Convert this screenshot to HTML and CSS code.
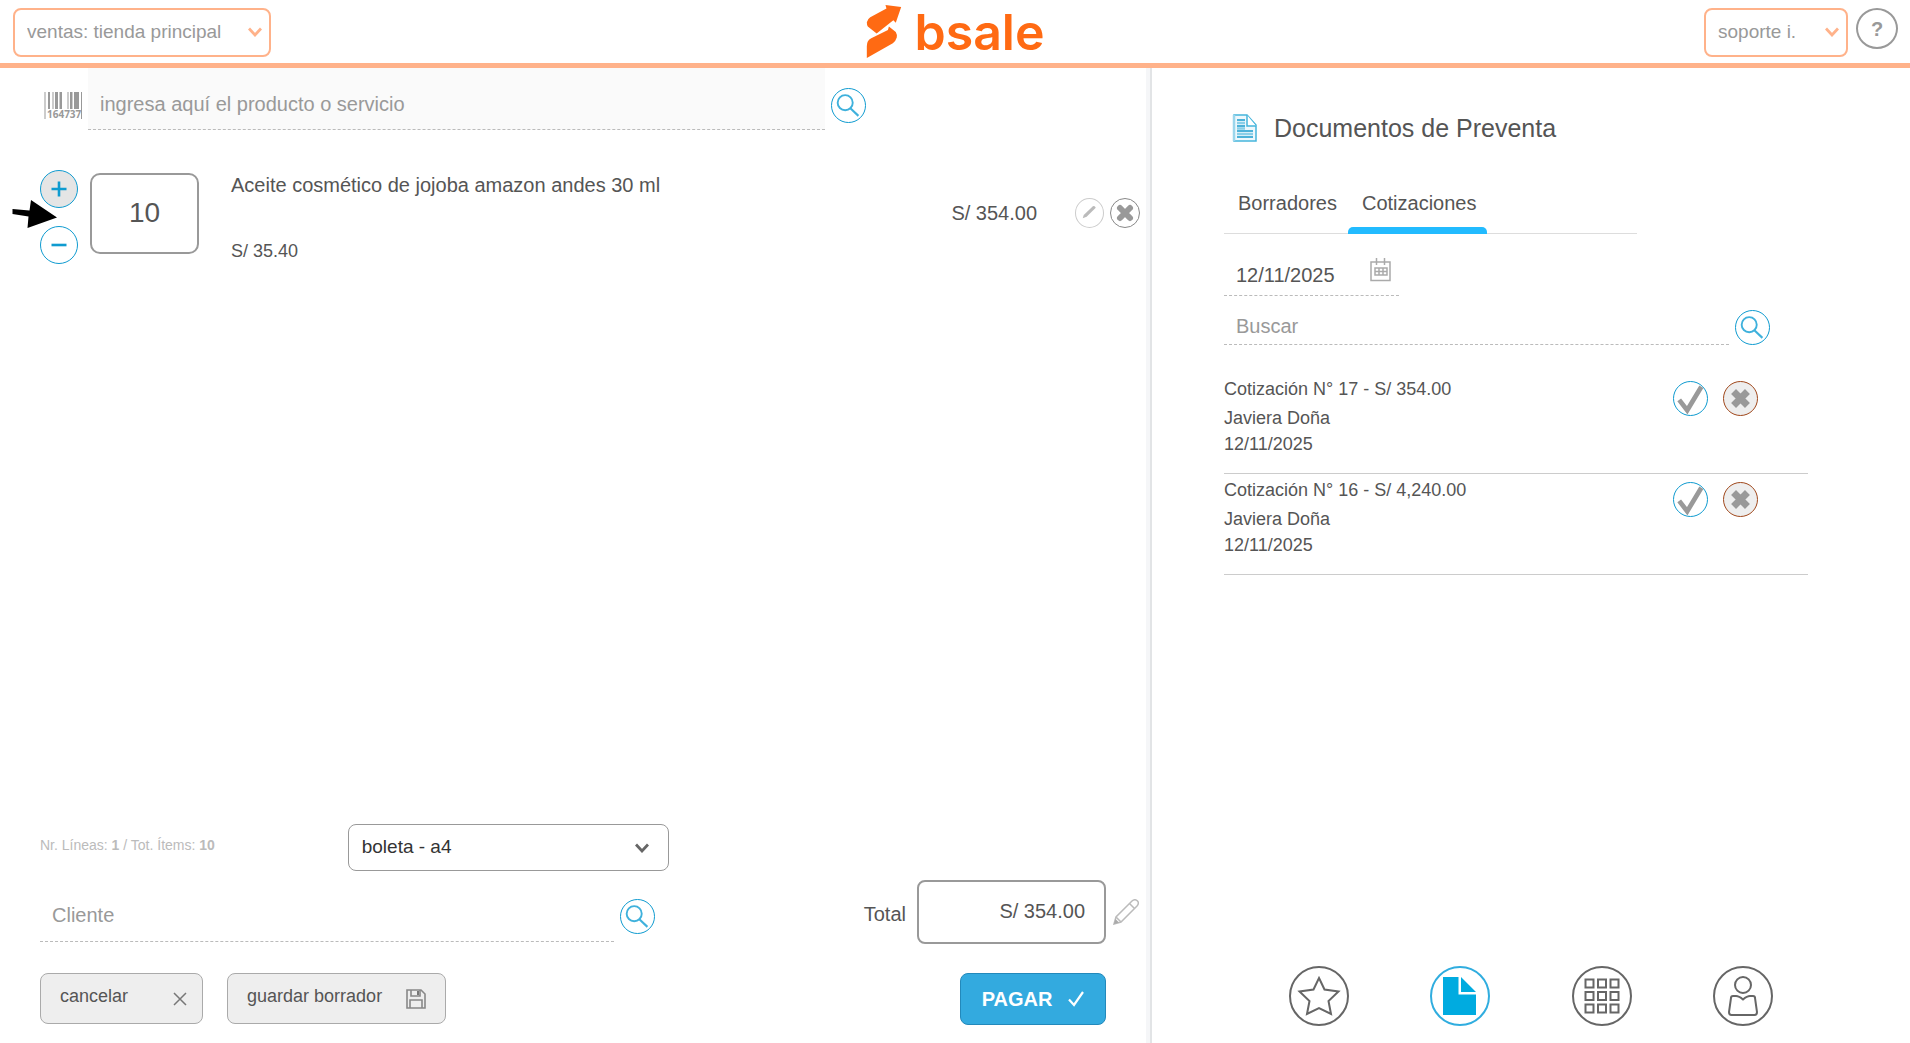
FILE: index.html
```html
<!DOCTYPE html>
<html lang="es">
<head>
<meta charset="utf-8">
<title>bsale - ventas</title>
<link rel="stylesheet" href="styles.css">
</head>
<body>
<svg class="defs" aria-hidden="true">
  <symbol id="search" viewBox="0 0 35 35"><g fill="none" stroke="#3fb1dc" stroke-width="2"><circle cx="14" cy="14.500" r="8"/><path d="M19.500 20.500 28 28.500" stroke-width="2.200"/></g></symbol>
  <symbol id="chevron" viewBox="0 0 14 10"><path d="M1 1.500 7 8l6-6.500" fill="none" stroke="currentColor" stroke-width="2.800"/></symbol>
  <symbol id="cross" viewBox="0 0 18 18"><path d="M4 4l10 10M14 4 4 14" fill="none" stroke="#999" stroke-width="5"/></symbol>
  <symbol id="check" viewBox="0 0 35 35"><path d="M5.500 19 14 30 29 5" fill="none" stroke="#999" stroke-width="5"/></symbol>
</svg>

<header class="topbar">
  <div class="select-box select-box--orange branch">
    <select aria-label="Sucursal"><option>ventas: tienda principal</option></select>
    <svg class="chevron"><use href="#chevron"/></svg>
  </div>
  <a class="logo" href="#">
    <svg class="logo-mark" viewBox="0 0 36 54" aria-hidden="true"><path d="M19.500 0 35.500 2 30 18 27.500 15.500 10.500 29 1.500 22Q.5 20 .5 17.500 1 14.500 4 12.500L20.500 3.500Z" fill="#ff6a13"/><path d="M23 22 30 27.500Q31.500 30 31 33 30 36.500 27 39L.5 54V42Q.5 36 5 34L22 25.500Z" fill="#ff6a13"/></svg>
    <span>bsale</span>
  </a>
  <div class="account">
    <div class="select-box select-box--orange user">
      <select aria-label="Usuario"><option>soporte i.</option></select>
      <svg class="chevron"><use href="#chevron"/></svg>
    </div>
    <button class="help" aria-label="Ayuda">?</button>
  </div>
</header>

<main class="layout">
  <section class="sale">
    <div class="product-search">
      <svg class="barcode" viewBox="0 0 38 30" aria-hidden="true"><path d="M4 0h2v17H4zM11 0h3v17h-3zM16 0h2v17h-2zM26 0h2v17h-2zM30 0h5v17h-5zM37 0h1v27h-1z" fill="#999"/><path d="M0 0h2v27H0zM8 0h2v17H8zM15 0h1v17h-1zM23 0h2v17h-2zM28 0h1v17h-1z" fill="#ccc"/><text x="3" y="26" fill="#999">164737</text></svg>
      <input class="field field--product" type="text" placeholder="ingresa aquí el producto o servicio" aria-label="Producto o servicio">
      <button class="round" aria-label="Buscar producto"><svg><use href="#search"/></svg></button>
    </div>

    <article class="item">
      <div class="stepper">
        <button class="step step--active" aria-label="Agregar"><svg viewBox="0 0 16 16"><path d="M8 .5v15M.5 8h15"/></svg></button>
        <button class="step" aria-label="Quitar"><svg viewBox="0 0 16 16"><path d="M.5 8h15"/></svg></button>
        <svg class="pointer" viewBox="0 0 46 30" aria-hidden="true"><path d="M.5 9 17.500 10.500 19 0 45 17.500 15.500 28 16.500 16.500.5 14Z"/></svg>
      </div>
      <input class="quantity" type="text" value="10" aria-label="Cantidad">
      <div class="description">
        <h2>Aceite cosmético de jojoba amazon andes 30 ml</h2>
        <p>S/ 35.40</p>
      </div>
      <div class="item-end">
        <span class="amount">S/ 354.00</span>
        <button class="small-round small-round--light" aria-label="Editar"><svg viewBox="0 0 28 28"><path d="M7 20 8 16.500 17.500 7.500Q19.500 6.500 20.500 9L11 18.500Z" fill="#bbb"/></svg></button>
        <button class="small-round" aria-label="Eliminar"><svg viewBox="0 0 28 28"><path d="M9 9l10 10M19 9 9 19" fill="none" stroke="#999" stroke-width="6" stroke-linecap="round"/></svg></button>
      </div>
    </article>

    <footer class="checkout">
      <div class="summary-row">
        <p class="counts">Nr. Líneas: <b>1</b> / Tot. Ítems: <b>10</b></p>
        <div class="select-box document-type">
          <select aria-label="Tipo de documento"><option>boleta - a4</option></select>
          <svg class="chevron"><use href="#chevron"/></svg>
        </div>
      </div>
      <div class="client-row">
        <div class="client">
          <input class="field" type="text" placeholder="Cliente" aria-label="Cliente">
          <button class="round" aria-label="Buscar cliente"><svg><use href="#search"/></svg></button>
        </div>
        <div class="total">
          <label for="total">Total</label>
          <input id="total" type="text" value="S/ 354.00" readonly>
          <button class="plain" aria-label="Editar total"><svg viewBox="0 0 26 26"><g fill="none" stroke="#bbb" stroke-width="1.500"><path d="M1 25 3 18 19 2Q22-.5 24.500 2 26.500 4 24 7L8 23Z"/><path d="M16.500 4.500 21.500 9.500M3 18l5 5"/></g><path d="M1 25l1.500-5 3.500 3.500Z" fill="#aaa"/></svg></button>
        </div>
      </div>
      <div class="actions">
        <button class="action">cancelar <svg class="icon-x" viewBox="0 0 14 14"><path d="M1 1l12 12M13 1 1 13" fill="none" stroke="#777" stroke-width="1.500"/></svg></button>
        <button class="action">guardar borrador <svg class="icon-save" viewBox="0 0 20 20"><g fill="none" stroke="#888" stroke-width="1.600"><path d="M1 1h14l4 4v14H1z"/><path d="M5 1v6h9V1M4 19v-8h12v8"/></g><path d="M11 2h2v4h-2z" fill="#777"/></svg></button>
        <button class="pay">PAGAR <svg viewBox="0 0 16 16"><path d="M1 8.500 6 14 15 1" fill="none" stroke="#fff" stroke-width="2.200"/></svg></button>
      </div>
    </footer>
  </section>

  <aside class="presale">
    <h1><svg viewBox="0 0 26 29" aria-hidden="true"><path d="M2 1h13l9 10v16H2z" fill="#eef8fc" stroke="#45b5dc" stroke-width="1.500"/><path d="M2 1v26" stroke="#9bd6ec" stroke-width="2.500"/><path d="M15 1v11h9" fill="#fff" stroke="#45b5dc" stroke-width="1.500"/><path d="M5 6h8M5 12h8M5 17h16M5 23h16" stroke="#189bcd" stroke-width="1.300"/><path d="M5 9h8M5 14.500h8M5 20h16" stroke="#8bcfe8" stroke-width="2.500"/></svg>Documentos de Preventa</h1>
    <nav class="tabs">
      <a href="#">Borradores</a>
      <a href="#" class="active">Cotizaciones</a>
    </nav>
    <div class="date">
      <input type="text" value="12/11/2025" aria-label="Fecha">
      <svg viewBox="0 0 22 24" aria-hidden="true"><g fill="none" stroke="#aaa" stroke-width="1.500"><path d="M1 4h19v18.500H1zM6.500 0v7M14.500 0v7" /><path d="M5 10h12v7H5zM9 10v7M13 10v7M5 13.500h12"/></g></svg>
    </div>
    <div class="quote-search">
      <input class="field" type="text" placeholder="Buscar" aria-label="Buscar cotización">
      <button class="round" aria-label="Buscar"><svg><use href="#search"/></svg></button>
    </div>
    <ul class="quotes">
      <li>
        <div><h3>Cotización N° 17 - S/ 354.00</h3><p>Javiera Doña</p><p>12/11/2025</p></div>
        <div class="quote-actions">
          <button class="round" aria-label="Aceptar"><svg><use href="#check"/></svg></button>
          <button class="round round--remove" aria-label="Eliminar"><svg class="x"><use href="#cross"/></svg></button>
        </div>
      </li>
      <li>
        <div><h3>Cotización N° 16 - S/ 4,240.00</h3><p>Javiera Doña</p><p>12/11/2025</p></div>
        <div class="quote-actions">
          <button class="round" aria-label="Aceptar"><svg><use href="#check"/></svg></button>
          <button class="round round--remove" aria-label="Eliminar"><svg class="x"><use href="#cross"/></svg></button>
        </div>
      </li>
    </ul>
    <nav class="sections">
      <a href="#" aria-label="Favoritos"><svg viewBox="0 0 60 60"><circle cx="30" cy="30" r="29"/><path d="M30 12 35.500 23.500 49.500 25.500 39.500 35 42 48 30 42 18 48 20.500 35 10.500 25.500 24.500 23.500Z"/></svg></a>
      <a href="#" aria-label="Documentos" class="current"><svg viewBox="0 0 60 60"><circle cx="30" cy="30" r="29"/><path class="solid" d="M13 11h15.500v17.500H46V49H13zM31 11 46 26H31z"/></svg></a>
      <a href="#" aria-label="Productos"><svg viewBox="0 0 60 60"><circle cx="30" cy="30" r="29"/><path d="M13.500 13.500h8v8h-8zM26 13.500h8v8h-8zM38.500 13.500h8v8h-8zM13.500 26h8v8h-8zM26 26h8v8h-8zM38.500 26h8v8h-8zM13.500 38.500h8v8h-8zM26 38.500h8v8h-8zM38.500 38.500h8v8h-8z"/></svg></a>
      <a href="#" aria-label="Clientes"><svg viewBox="0 0 60 60"><circle cx="30" cy="30" r="29"/><circle cx="30" cy="19" r="8"/><path d="M20 30h3Q26 30 30 33.500 34 30 37 30h3Q42 30 42 32L44 46Q44 49 41.500 49h-23Q16 49 16 46L18 32Q18 30 20 30Z"/></svg></a>
    </nav>
  </aside>
</main>
</body>
</html>
```

FILE: styles.css
```css
* {
  box-sizing: border-box;
}

body {
  margin: 0;
  min-height: 100vh;
  display: flex;
  flex-direction: column;
  background: #fff;
  color: #555;
  font-family: "Liberation Sans", Arial, sans-serif;
  font-size: 20px;
  line-height: 24px;
}

h1, h2, h3, p, ul {
  margin: 0;
  padding: 0;
  font-weight: normal;
  list-style: none;
}

button, input, select {
  margin: 0;
  font: inherit;
  color: inherit;
}

button {
  padding: 0;
  cursor: pointer;
}

input::placeholder {
  color: #999;
  opacity: 1;
}

a {
  color: inherit;
  text-decoration: none;
}

svg {
  display: block;
}

.defs {
  display: none;
}

/* Header */
.topbar {
  display: grid;
  grid-template-columns: 1fr auto 1fr;
  align-items: start;
  height: 68px;
  padding: 0 12px 0 13px;
  border-bottom: 5px solid #ffb28a;
}

.select-box {
  display: grid;
  align-items: center;
}

.select-box select,
.select-box .chevron {
  grid-area: 1 / 1;
}

.select-box select {
  width: 100%;
  height: 47px;
  padding: 0 40px 2px 13px;
  appearance: none;
  background: #fff;
  border: 1px solid #999;
  border-radius: 8px;
  color: #333;
  font-size: 19px;
}

.select-box .chevron {
  justify-self: end;
  width: 14px;
  height: 10px;
  margin-right: 20px;
  color: #666;
  pointer-events: none;
}

.select-box--orange select {
  height: 49px;
  padding-left: 12px;
  border: 2px solid #ffb28a;
  color: #999;
}

.select-box--orange .chevron {
  margin: 0 9px 2px 0;
  color: #ffb28a;
}

.branch {
  width: 258px;
  margin-top: 8px;
}

.logo {
  display: flex;
  gap: 12px;
  padding-top: 5px;
  color: #ff6a13;
  font-family: Inter, sans-serif;
  font-size: 50px;
  font-weight: 600;
  line-height: 54px;
}

.logo-mark {
  width: 36px;
  height: 53px;
}

.account {
  display: flex;
  justify-content: flex-end;
  gap: 8px;
  padding-top: 8px;
}

.user {
  width: 144px;
}

.help {
  width: 42px;
  height: 41px;
  background: #fff;
  border: 2px solid #999;
  border-radius: 50%;
  color: #999;
  font-weight: bold;
}

/* Page columns */
.layout {
  flex: 1;
  display: grid;
  grid-template-columns: 1152fr 758fr;
}

.sale {
  display: flex;
  flex-direction: column;
  min-width: 0;
  border-right: 2px solid #e2e4e6;
  box-shadow: inset -4px 0 #f5f6f8;
}

.field {
  min-width: 0;
  flex: 1;
  height: 52px;
  padding: 0 12px;
  background: transparent;
  border: 0;
  border-bottom: 1px dashed #bbb;
}

.round {
  flex: none;
  display: grid;
  place-items: center;
  width: 35px;
  height: 35px;
  background: #fff;
  border: 1px solid #0f9bd0;
  border-radius: 50%;
}

.round svg {
  width: 33px;
  height: 33px;
}

.round--remove {
  background: #eee;
  border-color: #a0481c;
}

.round .x {
  width: 25px;
  height: 25px;
}

.product-search {
  display: flex;
  align-items: center;
  gap: 6px;
  padding: 0 284px 0 44px;
}

.barcode {
  flex: none;
  width: 38px;
  height: 30px;
  margin-top: 16px;
  overflow: visible;
}

.barcode text {
  font: bold 10px "Open Sans", sans-serif;
}

.field--product {
  height: 62px;
  padding-top: 12px;
  background: #fafafa;
}

.product-search .round {
  margin-top: 13px;
}

/* Sale line */
.item {
  display: flex;
  align-items: flex-start;
  padding: 40px 10px 0 40px;
}

.stepper {
  position: relative;
  display: grid;
  gap: 18px;
}

.step {
  display: grid;
  place-items: center;
  width: 38px;
  height: 38px;
  background: #fff;
  border: 1px solid #0f9bd0;
  border-radius: 50%;
}

.step--active {
  background: #e5e5e5;
}

.step svg {
  width: 16px;
  height: 16px;
  fill: none;
  stroke: #0f9bd0;
  stroke-width: 2.6;
}

.pointer {
  position: absolute;
  top: 30px;
  left: -28px;
  width: 46px;
  height: 30px;
}

.quantity {
  width: 109px;
  height: 81px;
  margin: 3px 32px 0 12px;
  padding: 0 0 1px;
  border: 2px solid #999;
  border-radius: 10px;
  font-size: 28px;
  text-align: center;
}

.description {
  flex: 1;
  display: grid;
  gap: 42px;
  padding-top: 3px;
}

.description h2 {
  font-size: 20px;
}

.description p {
  font-size: 18px;
}

.item-end {
  display: flex;
  align-items: center;
  gap: 6px;
  height: 85px;
}

.amount {
  margin-right: 32px;
}

.small-round {
  width: 30px;
  height: 30px;
  background: #fff;
  border: 1px solid #888;
  border-radius: 50%;
}

.small-round--light {
  width: 29px;
  border-color: #ccc;
}

/* Checkout */
.checkout {
  margin-top: auto;
  padding: 0 11px 18px 40px;
}

.summary-row {
  display: flex;
  align-items: center;
}

.counts {
  width: 28%;
  color: #bbb;
  font-size: 14px;
  padding-bottom: 5px;
}

.document-type {
  width: 321px;
}

.client-row {
  display: flex;
  justify-content: space-between;
  align-items: flex-end;
  margin-top: 9px;
}

.client {
  flex: 0 1 56%;
  display: flex;
  align-items: center;
  gap: 6px;
  margin-bottom: 2px;
}

.total {
  display: flex;
  align-items: center;
}

.total label {
  padding-top: 4px;
}

.total input {
  width: 189px;
  height: 64px;
  margin: 0 7px 0 11px;
  padding: 0 19px 2px;
  border: 2px solid #999;
  border-radius: 8px;
  text-align: right;
}

.plain {
  background: none;
  border: 0;
}

.plain svg {
  width: 26px;
  height: 26px;
}

.actions {
  display: flex;
  gap: 24px;
  margin-top: 29px;
  padding-right: 33px;
}

.action {
  display: flex;
  align-items: center;
  height: 51px;
  padding: 0 19px 5px;
  background: #eee;
  border: 1px solid #aaa;
  border-radius: 8px;
  font-size: 18px;
}

.icon-x {
  width: 14px;
  height: 14px;
  margin: 5px -4px 0 45px;
}

.icon-save {
  width: 20px;
  height: 20px;
  margin: 5px 0 0 24px;
}

.pay {
  display: flex;
  align-items: center;
  justify-content: center;
  gap: 16px;
  width: 146px;
  height: 52px;
  margin-left: auto;
  background: #33aadf;
  border: 1px solid #2389bb;
  border-radius: 8px;
  color: #fff;
  font-weight: bold;
}

.pay svg {
  width: 16px;
  height: 16px;
}

/* Presale documents */
.presale {
  display: flex;
  flex-direction: column;
  min-width: 0;
  padding: 45px 102px 17px 72px;
}

.presale h1 {
  display: flex;
  align-items: center;
  gap: 16px;
  padding-left: 8px;
  font-size: 25px;
  line-height: 30px;
}

.presale h1 svg {
  width: 26px;
  height: 29px;
}

.tabs {
  display: flex;
  width: 413px;
  margin-top: 42px;
  border-bottom: 1px solid #ddd;
}

.tabs a {
  height: 48px;
  padding: 6px 11px 0 14px;
}

.tabs .active {
  display: flex;
  flex-direction: column;
  justify-content: space-between;
  height: 49px;
  margin-bottom: -1px;
}

.tabs .active::after {
  content: "";
  height: 7px;
  margin: 0 -11px 0 -14px;
  background: #22bbff;
  border-radius: 5px 5px 0 0;
}

.date {
  display: flex;
  width: 30%;
  height: 46px;
  margin-top: 16px;
  padding: 8px 7px 0 0;
  border-bottom: 1px dashed #bbb;
}

.date input {
  flex: 1;
  min-width: 0;
  padding: 0 0 0 12px;
  height: 34px;
  background: none;
  border: 0;
}

.date svg {
  width: 22px;
  height: 24px;
}

.quote-search {
  display: flex;
  align-items: flex-end;
  gap: 6px;
  padding-right: 38px;
}

.quote-search .field {
  height: 49px;
  padding-top: 12px;
}

.quotes {
  margin-top: 28px;
}

.quotes li {
  display: flex;
  justify-content: space-between;
  height: 101px;
  padding: 3px 50px 0 0;
  border-bottom: 1px solid #ccc;
  font-size: 18px;
  line-height: 26px;
}

.quotes h3 {
  margin-bottom: 3px;
  font-size: 18px;
}

.quote-actions {
  display: flex;
  gap: 15px;
  padding-top: 5px;
}

.sections {
  display: flex;
  justify-content: space-between;
  margin-top: auto;
  padding: 0 35px 0 65px;
}

.sections svg {
  width: 60px;
  height: 60px;
  fill: none;
  stroke: #666;
  stroke-width: 2;
}

.sections .current svg {
  stroke: #30addf;
}

.sections .solid {
  fill: #00abe0;
  stroke: none;
}
```
